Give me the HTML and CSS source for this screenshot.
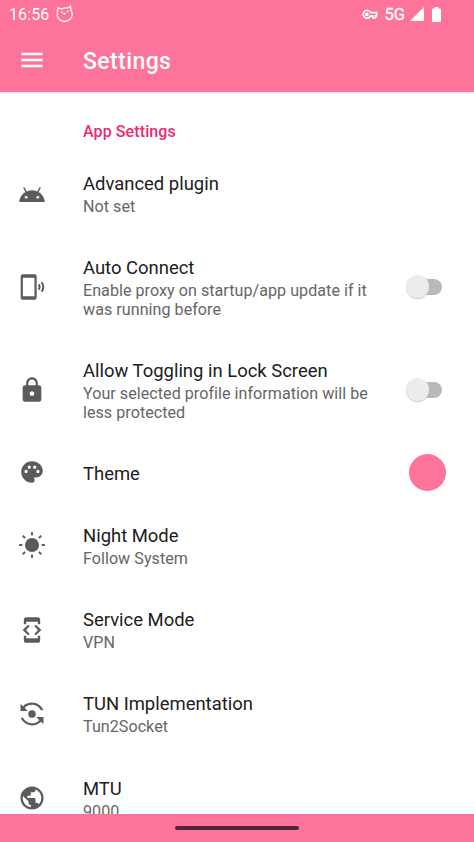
FILE: index.html
```html
<!DOCTYPE html>
<html lang="en">
<head>
<meta charset="utf-8">
<title>Settings</title>
<link rel="stylesheet" href="styles.css">
</head>
<body>
<div class="screen">
  <header class="header">
    <div class="status">
      <span class="clock">16:56</span>
      <svg class="cat" viewBox="0 0 18 18"><path d="M2.2 2.8 5.5 4Q9 2.4 12 2.9L14.3 1.2 15 5.2Q17.5 9.5 15 13.2 12.2 16.8 7.5 16.3 2.5 15.5 1.5 11.2L.9 10.3 1.6 9.5Q1 6 2.2 2.8ZM4.800 7.500l2-.7M10.600 6.400l2.100-.5M7.200 8.500l1.300.5.900-1.100"/></svg>
      <span class="grow"></span>
      <svg class="key" viewBox="0 0 16 11"><path d="M8.6 3.700H14.600v3.200h-1.200v2h-2.600v-2H8.600A3.900 3.900 0 1 1 8.6 3.700Z"/><circle cx="4.900" cy="5.400" r="1"/></svg>
      <span class="net">5G</span>
      <svg class="signal" viewBox="0 0 14 14"><path d="M14 0v14H0Z"/></svg>
      <svg class="battery" viewBox="0 0 9 15"><path d="M2.5 0h4v1.5H8q1 0 1 1V14q0 1-1 1H1q-1 0-1-1V2.500q0-1 1-1h1.500Z"/></svg>
    </div>
    <div class="toolbar">
      <svg class="icon menu" viewBox="0 0 24 24"><path d="M3 18.200h18v-2.200H3v2.200zm0-5.100h18v-2.200H3v2.200zm0-7.300v2.200h18V5.800H3z"/></svg>
      <h1>Settings</h1>
    </div>
  </header>
  <main class="list">
    <h2>App Settings</h2>
    <section class="row">
      <svg class="icon low" viewBox="0 0 24 24"><path d="m17.600 9.480 1.840-3.180c.16-.31.04-.69-.26-.85-.29-.15-.65-.06-.83.22l-1.880 3.240c-2.860-1.210-6.080-1.210-8.940 0L5.650 5.670c-.19-.29-.58-.38-.87-.2-.28.18-.37.540-.22.83L6.400 9.480C3.300 11.250 1.280 14.440 1 18h22c-.28-3.560-2.300-6.750-5.400-8.520zM7 15.250a1.250 1.250 0 1 1 0-2.500 1.250 1.250 0 0 1 0 2.500zm10 0a1.250 1.250 0 1 1 0-2.500 1.250 1.250 0 0 1 0 2.500z"/></svg>
      <div class="text"><h3>Advanced plugin</h3><p>Not set</p></div>
    </section>
    <section class="row tall">
      <svg class="icon" viewBox="0 0 24 24"><path fill-rule="evenodd" d="M4 1h10.300Q16 1 16 2.700v18.600Q16 23 14.300 23H4Q2.300 23 2.300 21.300V2.700Q2.300 1 4 1ZM4.200 4v16h9.900V4Z"/><path class="wave" d="M17.700 9.800q1.600 2.200 0 4.400M20.200 8q3 4 0 8"/></svg>
      <div class="text"><h3>Auto Connect</h3><p>Enable proxy on startup/app update if it<br>was running before</p></div>
      <span class="switch"></span>
    </section>
    <section class="row tall">
      <svg class="icon" viewBox="0 0 24 24"><path d="M18 8h-1V6c0-2.760-2.240-5-5-5S7 3.240 7 6v2H6c-1.100 0-2 .9-2 2v10c0 1.100.9 2 2 2h12c1.100 0 2-.9 2-2V10c0-1.100-.9-2-2-2zm-6 9c-1.100 0-2-.9-2-2s.9-2 2-2 2 .9 2 2-.9 2-2 2zm3.100-9H8.900V6c0-1.710 1.390-3.100 3.100-3.100s3.100 1.390 3.100 3.100v2z"/></svg>
      <div class="text"><h3>Allow Toggling in Lock Screen</h3><p>Your selected profile information will be<br>less protected</p></div>
      <span class="switch"></span>
    </section>
    <section class="row short">
      <svg class="icon" viewBox="-1 -1 26 26"><path d="M12 2C6.490 2 2 6.490 2 12s4.490 10 10 10c1.380 0 2.500-1.120 2.500-2.500 0-.61-.23-1.200-.64-1.670-.08-.1-.13-.21-.13-.33 0-.28.22-.5.500-.5H16c3.310 0 6-2.690 6-6 0-4.960-4.490-9-10-9zm5.500 11c-.83 0-1.500-.67-1.500-1.500s.67-1.500 1.500-1.500 1.500.67 1.500 1.500-.67 1.500-1.500 1.500zm-3-4c-.83 0-1.500-.67-1.500-1.500S13.670 6 14.500 6s1.500.67 1.500 1.500S15.330 9 14.500 9zM5 11.500c0-.83.67-1.500 1.500-1.500s1.500.67 1.500 1.500S7.330 13 6.500 13 5 12.330 5 11.500zm6-4c0 .83-.67 1.500-1.500 1.500S8 8.330 8 7.500 8.670 6 9.500 6s1.500.67 1.500 1.500z"/></svg>
      <div class="text"><h3>Theme</h3></div>
      <span class="swatch"></span>
    </section>
    <section class="row">
      <svg class="icon" viewBox="0 0 24 24"><circle cx="12" cy="12" r="6"/><path class="rays" d="M12 1v2.700M12 20.300v2.700M1 12h2.700M20.300 12h2.700M4.100 4.100l1.900 1.900M18 18l1.900 1.900M4.100 19.900l1.900-1.900M18 6l1.900-1.900"/></svg>
      <div class="text"><h3>Night Mode</h3><p>Follow System</p></div>
    </section>
    <section class="row">
      <svg class="icon" viewBox="0 0 24 24"><path d="M7 5h10v2h2V3c0-1.100-.9-1.990-2-1.990L7 1c-1.100 0-2 .9-2 2v4h2V5zm8.410 11.590L20 12l-4.590-4.590L14 8.830 17.170 12 14 15.170l1.410 1.420zM10 15.170 6.830 12 10 8.830 8.590 7.410 4 12l4.590 4.590L10 15.170zM17 19H7v-2H5v4c0 1.100.9 2 2 2h10c1.100 0 2-.9 2-2v-4h-2v2z"/></svg>
      <div class="text"><h3>Service Mode</h3><p>VPN</p></div>
    </section>
    <section class="row">
      <svg class="icon" viewBox="0 0 24 24"><circle cx="12" cy="12" r="3.200"/><path d="M8.300 9.500H2.200V3.200L4.300 5.300C6.300 3.300 9 2.200 12 2.200c4.400 0 8.200 2.700 9.700 6.500h-2.100C18.200 5.900 15.300 4 12 4 9.500 4 7.300 5 5.700 6.700ZM15.700 14.500h6.100v6.300L19.700 18.700C17.700 20.700 15 21.800 12 21.800c-4.400 0-8.200-2.700-9.700-6.500h2.100C5.800 18.100 8.700 20 12 20c2.500 0 4.700-1 6.300-2.700Z"/></svg>
      <div class="text"><h3>TUN Implementation</h3><p>Tun2Socket</p></div>
    </section>
    <section class="row">
      <svg class="icon" viewBox="-1.300 -1.300 26.600 26.600"><path d="M12 1C5.930 1 1 5.930 1 12s4.930 11 11 11 11-4.930 11-11S18.070 1 12 1zm-1.100 19.720C6.560 20.180 3.200 16.480 3.200 12c0-.68.090-1.330.23-1.970L8.700 15.300v1.100c0 1.210.99 2.200 2.200 2.200v2.120zm7.590-2.790a2.190 2.190 0 0 0-2.090-1.530h-1.100v-3.300c0-.61-.49-1.100-1.100-1.100H7.600V9.800h2.200c.61 0 1.100-.49 1.100-1.100V6.500h2.200c1.210 0 2.200-.99 2.200-2.200v-.45c3.220 1.310 5.500 4.470 5.500 8.150 0 2.290-.88 4.370-2.310 5.930z"/></svg>
      <div class="text"><h3>MTU</h3><p>9000</p></div>
    </section>
  </main>
  <footer class="nav"><span class="pill"></span></footer>
</div>
</body>
</html>
```
FILE: styles.css
```css
* { box-sizing: border-box; }
body { margin: 0; background: #fff; font-family: Roboto, "Liberation Sans", sans-serif; }
h1, h2, h3, p { margin: 0; font-weight: 400; white-space: nowrap; }
svg { display: block; flex: none; }

.screen { width: 474px; height: 842px; display: flex; flex-direction: column; overflow: hidden; }

.header { flex: none; height: 92px; background: #fd7399; color: #fff; box-shadow: 0 1px 1px #e8e8e8; }
.status { height: 28px; padding: 0 33px 0 9px; display: flex; align-items: center; font-size: 16px; }
.clock { letter-spacing: .1px; }
.cat { width: 18px; height: 18px; margin-left: 7px; fill: none; stroke: #fff; stroke-width: 1.3; }
.grow { flex: 1; }
.key { width: 16px; height: 11px; fill: none; stroke: #fff; stroke-width: 1.700; }
.net { margin-left: 6px; font-size: 16.500px; -webkit-text-stroke: .3px #fff; }
.signal { width: 14px; height: 14px; margin-left: 5px; fill: #fff; }
.battery { width: 9px; height: 15px; margin-left: 8px; fill: #fff; }
.toolbar { height: 64px; display: flex; align-items: center; padding-left: 18px; }
.menu.icon { width: 28px; height: 28px; margin-right: 37px; fill: #fff; }
h1 { padding-top: 3px; font-size: 23px; line-height: 28px; font-weight: 500; letter-spacing: .4px; }

.list { flex: 1; min-height: 0; overflow: hidden; }
h2 { height: 59px; padding: 29px 0 0 83px; font-size: 16px; line-height: 21px; font-weight: 500; letter-spacing: .1px; color: #ec2b70; }
.row { height: 84.300px; padding: 0 28px 0 18px; display: flex; align-items: center; }
.row.tall { height: 102.900px; }
.row.short { height: 62px; }
.row.short h3 { padding-top: 1px; }
.icon { width: 28px; height: 28px; margin-right: 37px; fill: #5b5b5b; }
.icon.low { margin-top: 3px; }
.wave, .rays { fill: none; stroke: #5b5b5b; stroke-width: 1.700; }
.text { flex: 1; padding-top: 2px; }
h3 { font-size: 18.450px; line-height: 22px; color: #202020; }
p { margin-top: 2px; font-size: 16.100px; line-height: 19px; color: #666; letter-spacing: .04px; }

.switch { position: relative; width: 35px; height: 16px; margin-right: 4px; background: #b9b9b9; border-radius: 8px; }
.switch::before { content: ""; position: absolute; left: -1px; top: -4px; width: 23px; height: 23px; border-radius: 50%; background: #ececec; box-shadow: 0 1px 1px #ccc; }
.swatch { width: 37px; height: 37px; border-radius: 50%; background: #fd7399; }

.nav { flex: none; height: 28px; background: #fd7399; display: flex; justify-content: center; }
.pill { width: 124px; height: 4px; margin-top: 12px; border-radius: 2px; background: #54253a; }
```
